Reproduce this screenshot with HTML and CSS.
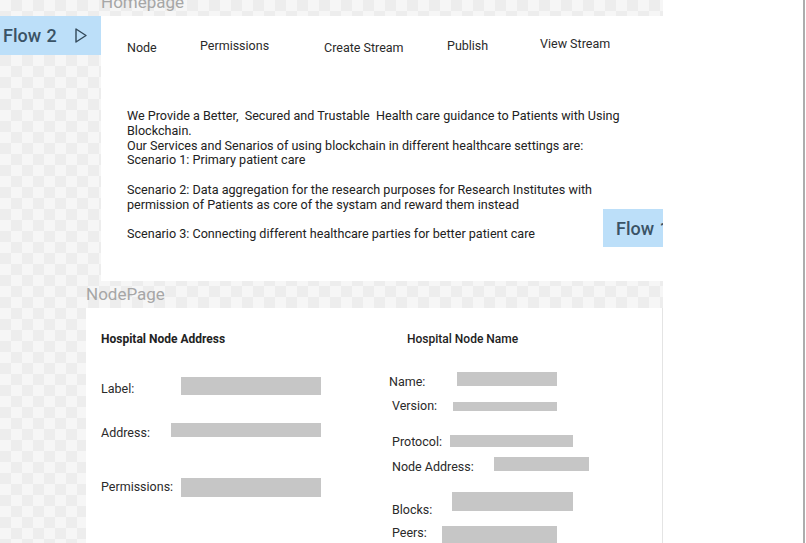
FILE: index.html
```html
<!DOCTYPE html>
<html lang="en">
<head>
    <meta charset="UTF-8">
    <meta name="viewport" content="width=device-width, initial-scale=1.0">
    <title>Health Chain - Prototype</title>
    <link rel="stylesheet" href="styles.css">
</head>
<body>
    <div class="workspace">
        <div class="canvas">
            <div class="flow-tag flow-start">
                Flow 2
                <svg class="play" width="12" height="15" viewBox="0 0 12 15">
                    <path d="M1 1 L11 7.5 L1 14 Z" fill="none" stroke="#33495a" stroke-width="1.4" stroke-linejoin="round"/>
                </svg>
            </div>

            <section class="artboard artboard-home">
                <div class="artboard-title">Homepage</div>
                <div class="screen home">
                    <nav class="menu">
                        <span>Node</span>
                        <span>Permissions</span>
                        <span>Create Stream</span>
                        <span>Publish</span>
                        <span>View Stream</span>
                    </nav>
                    <p class="intro">
                        We Provide a Better,&nbsp; Secured and Trustable&nbsp; Health care guidance to Patients with Using<br>
                        Blockchain.<br>
                        Our Services and Senarios of using blockchain in different healthcare settings are:<br>
                        Scenario 1: Primary patient care<br>
                        <br>
                        Scenario 2: Data aggregation for the research purposes for Research Institutes with<br>
                        permission of Patients as core of the systam and reward them instead<br>
                        <br>
                        Scenario 3: Connecting different healthcare parties for better patient care
                    </p>
                </div>
            </section>

            <div class="flow-tag flow-end">Flow 1</div>

            <section class="artboard artboard-node">
                <div class="artboard-title">NodePage</div>
                <div class="screen node">
                    <div class="node-col node-address">
                        <h4>Hospital Node Address</h4>
                        <div class="field f-label"><span>Label:</span><i class="bar"></i></div>
                        <div class="field f-address"><span>Address:</span><i class="bar"></i></div>
                        <div class="field f-perm"><span>Permissions:</span><i class="bar"></i></div>
                    </div>
                    <div class="node-col node-name">
                        <h4>Hospital Node Name</h4>
                        <div class="field f-name"><span>Name:</span><i class="bar"></i></div>
                        <div class="field f-version"><span>Version:</span><i class="bar"></i></div>
                        <div class="field f-protocol"><span>Protocol:</span><i class="bar"></i></div>
                        <div class="field f-nodeaddr"><span>Node Address:</span><i class="bar"></i></div>
                        <div class="field f-blocks"><span>Blocks:</span><i class="bar"></i></div>
                        <div class="field f-peers"><span>Peers:</span><i class="bar"></i></div>
                    </div>
                </div>
            </section>
        </div>
        <aside class="panel"></aside>
    </div>
</body>
</html>
```

FILE: styles.css
```css
* {
    box-sizing: border-box;
}

body {
    margin: 0;
    font-family: Roboto, "Liberation Sans", Arial, sans-serif;
    background-color: #fff;
    color: #222;
    overflow: hidden;
}

.workspace {
    display: flex;
    height: 543px;
}

/* checkered design canvas */
.canvas {
    position: relative;
    flex: none;
    width: 663px;
    overflow: hidden;
    background: repeating-conic-gradient(#ededed 0 25%, #f6f6f6 0 50%) 0 0 / 22px 22px;
}

.panel {
    width: 142px;
    border-right: 2px solid #adadad;
    background-color: #fff;
}

/* prototype flow markers */
.flow-tag {
    position: absolute;
    display: flex;
    align-items: center;
    width: 101px;
    background-color: #bcdff9;
    color: #3a5366;
    font-size: 18px;
    font-weight: 500;
    word-spacing: 1px;
    white-space: nowrap;
    z-index: 2;
}

.flow-start {
    left: 0;
    top: 16px;
    height: 39px;
    padding-left: 3px;
}

.flow-start .play {
    margin-left: 18px;
}

.flow-end {
    left: 603px;
    top: 209px;
    height: 38px;
    padding-left: 13px;
}

/* artboards */
.artboard-title {
    font-size: 17px;
    line-height: 27px;
    color: #a6a6a6;
}

.screen {
    background-color: #fff;
}

.artboard-home {
    margin: -11px 0 0 101px;
}

.home {
    width: 600px;
    height: 265px;
    padding: 20px 0 0 26px;
}

.menu {
    display: flex;
    align-items: flex-start;
    font-size: 12.5px;
    line-height: 15px;
    color: #2a2a2a;
}

.menu span {
    flex: none;
}

.menu span:nth-child(1) { width: 73px;  margin-top: 4px; }
.menu span:nth-child(2) { width: 124px; margin-top: 2px; }
.menu span:nth-child(3) { width: 123px; margin-top: 4px; }
.menu span:nth-child(4) { width: 93px;  margin-top: 2px; }

.intro {
    margin: 54px 0 0;
    font-size: 12.6px;
    line-height: 14.8px;
}

.artboard-node {
    margin-left: 86px;
}

.node {
    display: flex;
    width: 576px;
    height: 260px;
    padding: 24px 0 0 15px;
    box-shadow: 1px 0 0 #e4e4e4;
}

.node-col h4 {
    margin: 0;
    font-size: 12px;
    line-height: 15px;
}

.node-address {
    width: 288px;
}

.node-address h4 {
    font-weight: 700;
    height: 45px;
}

.node-name h4 {
    font-weight: 500;
    height: 40px;
    margin-left: 18px;
}

.field {
    display: flex;
    align-items: flex-start;
    font-size: 12.5px;
    line-height: 15px;
    color: #2a2a2a;
}

.field span {
    flex: none;
}

.bar {
    display: block;
    flex: none;
    background-color: #c6c6c6;
}

/* left column rows */
.f-label { height: 46px; }
.f-label span { width: 80px; margin-top: 4px; }
.f-label .bar { width: 140px; height: 18px; }

.f-address { height: 55px; }
.f-address span { width: 70px; margin-top: 2px; }
.f-address .bar { width: 150px; height: 14px; }

.f-perm span { width: 80px; margin-top: 1px; }
.f-perm .bar { width: 140px; height: 19px; }

/* right column rows */
.node-name .field span { margin-left: 3px; }

.f-name { height: 26px; }
.f-name span { width: 68px; margin-top: 2px; }
.node-name .f-name span { margin-left: 0; }
.f-name .bar { width: 100px; height: 14px; }

.f-version { height: 36px; }
.f-version span { width: 61px; }
.f-version .bar { width: 104px; height: 9px; margin-top: 4px; }

.f-protocol { height: 23px; }
.f-protocol span { width: 58px; }
.f-protocol .bar { width: 123px; height: 12px; margin-top: 1px; }

.f-nodeaddr { height: 35px; }
.f-nodeaddr span { width: 102px; margin-top: 2px; }
.f-nodeaddr .bar { width: 95px; height: 14px; }

.f-blocks { height: 33px; }
.f-blocks span { width: 60px; margin-top: 10px; }
.f-blocks .bar { width: 121px; height: 19px; }

.f-peers span { width: 50px; }
.f-peers .bar { width: 115px; height: 20px; margin-top: 1px; }
```
